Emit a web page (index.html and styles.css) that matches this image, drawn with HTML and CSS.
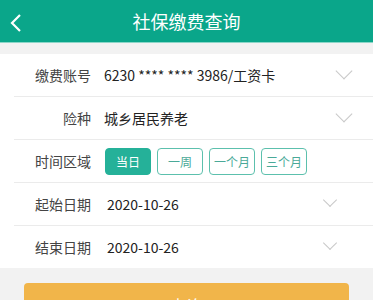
FILE: index.html
```html
<!DOCTYPE html>
<html>
<head>
    <title>社保缴费查询</title>
    <link rel="stylesheet" href="styles.css">
</head>
<body>
    <div class="header">
        <span class="back">
            <svg width="14" height="20" viewBox="0 0 14 20"><path d="M11 2 L3 10 L11 18" fill="none" stroke="#fff" stroke-width="2.2"/></svg>
        </span>
        <h1>社保缴费查询</h1>
    </div>

    <div class="form">
        <div class="row">
            <span class="label">缴费账号</span>
            <span class="value">6230 **** **** 3986/工资卡</span>
            <span class="arrow"></span>
        </div>
        <div class="row">
            <span class="label">险种</span>
            <span class="value">城乡居民养老</span>
            <span class="arrow"></span>
        </div>
        <div class="row">
            <span class="label">时间区域</span>
            <div class="ranges">
                <button class="active">当日</button>
                <button>一周</button>
                <button>一个月</button>
                <button>三个月</button>
            </div>
        </div>
        <div class="row date">
            <span class="label">起始日期</span>
            <span class="value">2020-10-26</span>
            <span class="arrow small"></span>
        </div>
        <div class="row date">
            <span class="label">结束日期</span>
            <span class="value">2020-10-26</span>
            <span class="arrow small"></span>
        </div>
    </div>

    <div class="actions">
        <button class="submit">查询</button>
    </div>
</body>
</html>
```

FILE: styles.css
```css
body {
    margin: 0;
    background: #f2f2f2;
    font-family: "Noto Sans CJK SC", "Noto Sans", sans-serif;
    color: #333;
}
.header {
    height: 42px;
    background: #0aa68a;
    border-bottom: 1px solid #8dd6c8;
    display: flex;
    align-items: center;
    justify-content: center;
    position: relative;
}
.header h1 {
    margin: 0;
    color: #fff;
    font-size: 18px;
    font-weight: normal;
}
.back {
    position: absolute;
    left: 9px;
    top: 13px;
}
.form {
    margin-top: 11px;
    background: #fff;
}
.row {
    height: 42px;
    margin-left: 14px;
    border-bottom: 1px solid #ebebeb;
    display: flex;
    align-items: center;
}
.row:last-child {
    border-bottom: none;
}
.label {
    width: 77px;
    text-align: right;
    font-size: 14px;
    color: #444;
    flex-shrink: 0;
}
.value {
    margin-left: 13px;
    font-size: 14px;
    color: #222;
    flex-grow: 1;
}
.date .value {
    margin-left: 16px;
}
.arrow {
    width: 11px;
    height: 11px;
    border-right: 1px solid #c8c8c8;
    border-bottom: 1px solid #c8c8c8;
    transform: rotate(45deg);
    margin: -8px 23px 0 0;
}
.arrow.small {
    width: 9px;
    height: 9px;
    margin-right: 38px;
}
.ranges {
    margin-left: 14px;
    display: flex;
    gap: 6px;
}
.ranges button {
    width: 46px;
    height: 27px;
    padding: 0;
    border: 1px solid #5cc0ad;
    border-radius: 4px;
    background: #fff;
    color: #4aa998;
    font-family: inherit;
    font-size: 12px;
}
.ranges button.active {
    background: #25b199;
    border-color: #25b199;
    color: #fff;
}
.actions {
    padding: 15px 24px;
}
.submit {
    width: 100%;
    height: 44px;
    border: none;
    border-radius: 4px;
    background: #f1b54a;
    color: #fff;
    font-family: inherit;
    font-size: 17px;
}
```
